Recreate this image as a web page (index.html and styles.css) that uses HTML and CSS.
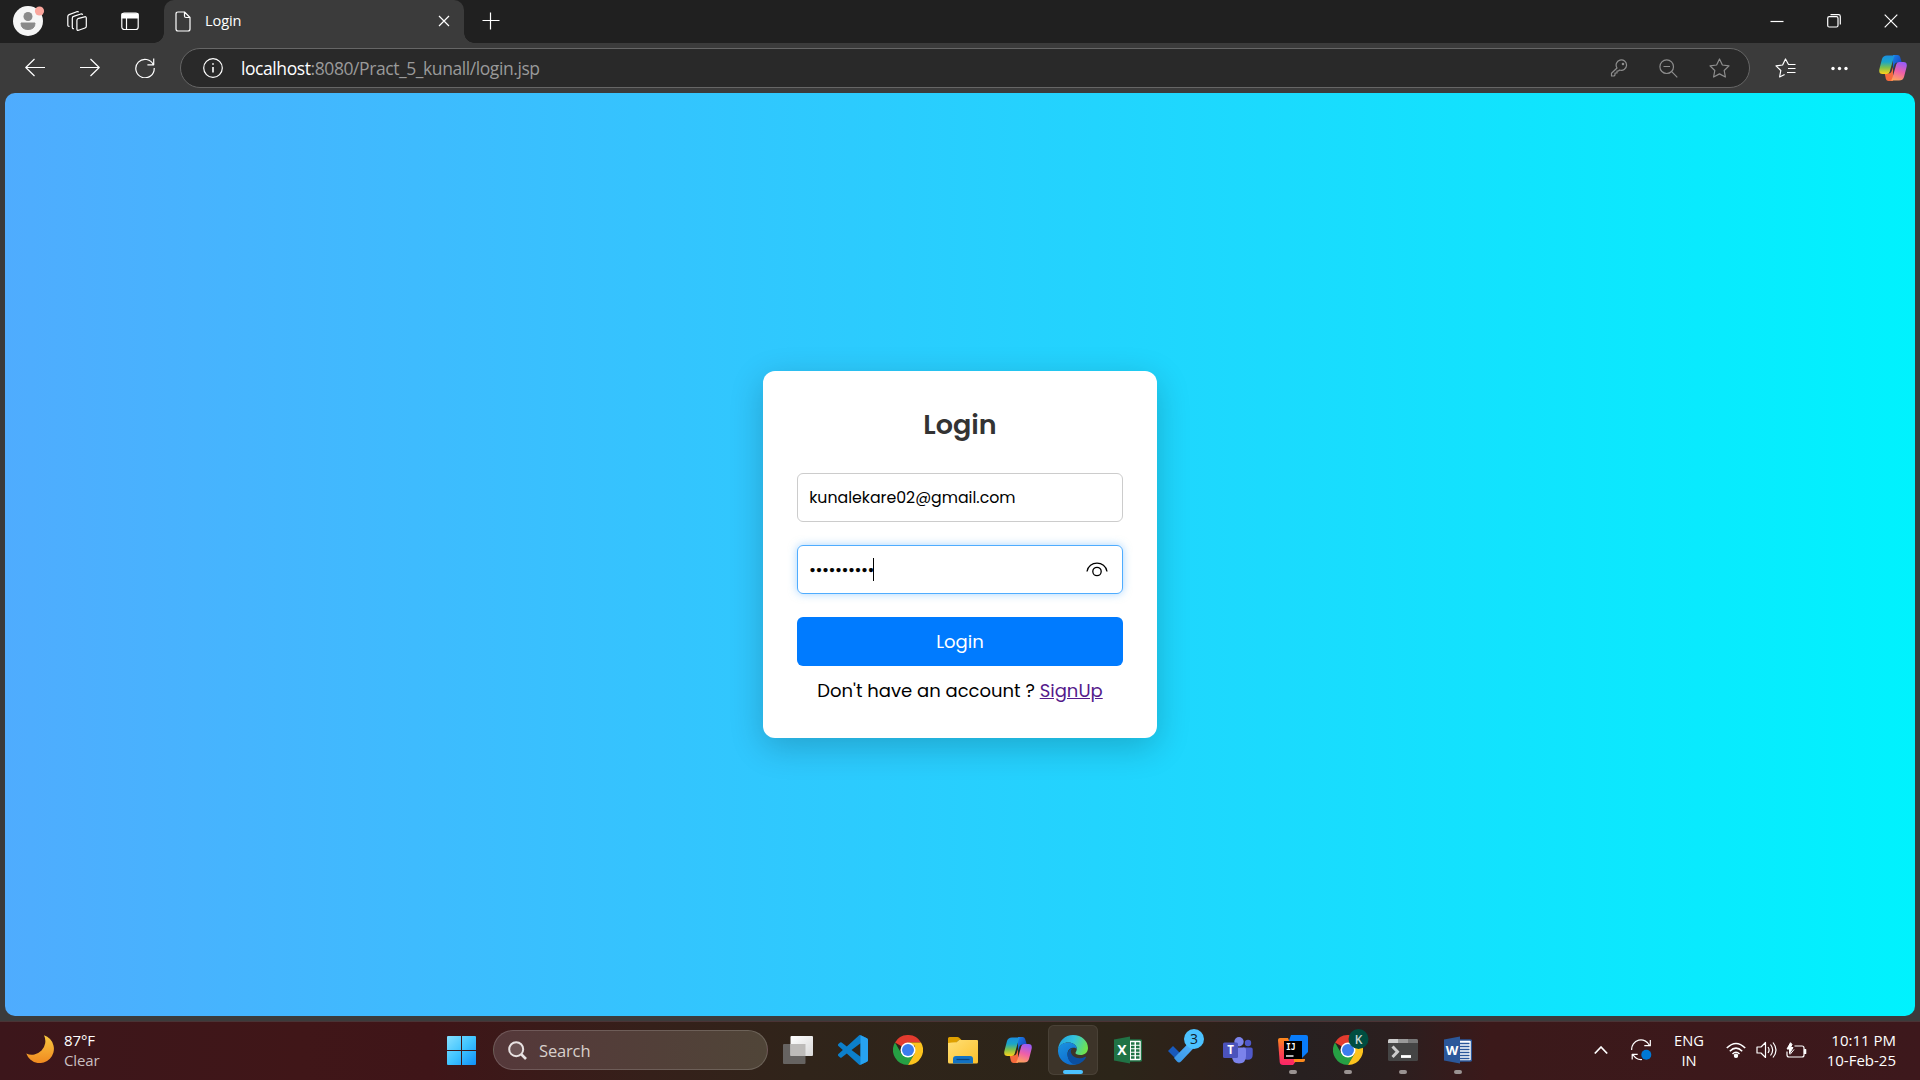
FILE: index.html
```html
<!DOCTYPE html>
<html lang="en">
<head>
<meta charset="utf-8">
<title>Login</title>
<link rel="stylesheet" href="styles.css">
</head>
<body>
<svg class="defs" width="0" height="0">
  <defs>
    <linearGradient id="cpA" x1="0" y1="0" x2="0" y2="1"><stop offset="0" stop-color="#1b8fe0"/><stop offset=".35" stop-color="#1aa5c8"/><stop offset=".65" stop-color="#7cc04e"/><stop offset="1" stop-color="#ffd21a"/></linearGradient>
    <linearGradient id="cpB" x1=".6" y1="0" x2=".3" y2="1"><stop offset="0" stop-color="#9a5cf5"/><stop offset=".5" stop-color="#ef5fa8"/><stop offset="1" stop-color="#ffa45c"/></linearGradient>
    <linearGradient id="cpC" x1="0" y1="0" x2="1" y2="1"><stop offset="0" stop-color="#1a7fe8"/><stop offset="1" stop-color="#1638b8"/></linearGradient>
    <linearGradient id="edA" x1="0" y1=".2" x2="1" y2=".5"><stop offset="0" stop-color="#1fa3e0"/><stop offset=".5" stop-color="#35c4dc"/><stop offset="1" stop-color="#6fe34c"/></linearGradient>
    <linearGradient id="edB" x1="0" y1="0" x2=".5" y2="1"><stop offset="0" stop-color="#1b93e0"/><stop offset="1" stop-color="#0f6fd0"/></linearGradient>
    <linearGradient id="moon" x1="0" y1="0" x2="0" y2="1"><stop offset="0" stop-color="#f9c740"/><stop offset="1" stop-color="#f08a20"/></linearGradient>
    <linearGradient id="win" x1="0" y1="0" x2="1" y2="1"><stop offset="0" stop-color="#86e0ff"/><stop offset=".5" stop-color="#40c4ff"/><stop offset="1" stop-color="#0f90f8"/></linearGradient>
    <linearGradient id="fold" x1="0" y1="0" x2="1" y2="1"><stop offset="0" stop-color="#ffdf75"/><stop offset="1" stop-color="#fcc02c"/></linearGradient>
    <linearGradient id="tv" x1="0" y1="0" x2="1" y2="1"><stop offset="0" stop-color="#ffffff"/><stop offset="1" stop-color="#d8d8d8"/></linearGradient>
    <linearGradient id="ijA" x1="0" y1="0" x2="0" y2="1"><stop offset="0" stop-color="#fd8a1c"/><stop offset=".5" stop-color="#fb4a4a"/><stop offset="1" stop-color="#fb2468"/></linearGradient>
    <linearGradient id="todo" x1="0" y1="1" x2="1" y2="0"><stop offset="0" stop-color="#3795e8"/><stop offset="1" stop-color="#5ab8fa"/></linearGradient>
    <symbol id="copilot" viewBox="0 0 28 26">
      <path d="M14 0h4.500q2 0 2.600 2l1.700 5.500h-4.500q-2 0-2.800 2L14 14Z" fill="url(#cpC)"/>
      <path d="M14 26H9.500q-2 0-2.600-2l-1.200-5.500h4q2 0 2.800-2L14 12Z" fill="#f56a3c"/>
      <path d="M8 .5h8.500q-1.400.7-2 3l-3.800 13.200q-.7 2.300-3 2.300H3.500Q.2 19 .2 15.700q0-1.200.4-2.500L3 4Q4 .5 8 .5Z" fill="url(#cpA)"/>
      <path d="M20 25.500h-8.500q1.400-.7 2-3l3.800-13.200q.7-2.300 3-2.300h4.200q3.300 0 3.300 3.300 0 1.200-.4 2.500L25 22q-1 3.500-5 3.500Z" fill="url(#cpB)"/>
    </symbol>
    <symbol id="chrome" viewBox="0 0 30 30">
      <path d="M15 15 2 7.500A15 15 0 0 1 28 7.500H15Z" fill="#e33b2e"/>
      <path d="M2 7.500A15 15 0 0 0 15 30l6.500-11.300L8.500 18.700Z" fill="#26a044"/>
      <path d="M28 7.500A15 15 0 0 1 15 30l6.500-11.300L22 11 15 7.500Z" fill="#fcc31e"/>
      <circle cx="15" cy="15" r="7.500" fill="#fff"/><circle cx="15" cy="15" r="6" fill="#3b7ded"/>
    </symbol>
  </defs>
</svg>

<header class="tabstrip">
  <svg class="avatar" width="32" height="32" viewBox="0 0 32 32"><circle cx="15" cy="16" r="15" fill="#f6f6f6"/><circle cx="15" cy="11.500" r="4.500" fill="#8a8a8a"/><path d="M8 18h14q0 6.500-7 6.500T8 18Z" fill="#8a8a8a" stroke="#8a8a8a" stroke-linejoin="round"/><circle cx="26.500" cy="6" r="4.600" fill="#fba69d"/></svg>
  <svg class="line collections" width="22" height="22" viewBox="0 0 22 22"><path d="m11.800 8.700 6.800-1.900q1.700-.4 1.700 1.300v8.200q0 1.300-1.300 1.700l-6.400 2.200q-1.700.5-1.700-1.200v-8.400q0-1.500.9-1.900Z"/><path d="M8 18.700q-1.700.3-1.700-1.400V8.200q0-1.400 1.300-1.800L14.800 4q1.400-.4 1.800.9"/><path d="M3.500 16.300q-1.700.3-1.700-1.400V6.500q0-1.400 1.300-1.900l7.700-2.900q1.400-.4 1.800.6"/></svg>
  <svg class="line tabmenu" width="18" height="19" viewBox="0 0 18 19"><rect x=".8" y="1" width="16.400" height="16.500" rx="2.500"/><path d="M1 1.800h16V6H1Z" fill="#fff"/><path d="M5.500 6v11"/></svg>
  <div class="tab">
    <svg class="line" width="16" height="21" viewBox="0 0 16 21"><path d="M3 1h6.500L15 6.500V18q0 2-2 2H3q-2 0-2-2V3q0-2 2-2Zm6.500 0v4q0 1.500 1.500 1.500h4"/></svg>
    <span class="tab-title">Login</span>
    <svg class="line tab-close" width="12" height="12" viewBox="0 0 12 12"><path d="m1 1 10 10M11 1 1 11"/></svg>
  </div>
  <svg class="line newtab" width="18" height="18" viewBox="0 0 18 18"><path d="M8.500.5v17M.5 8.500h17"/></svg>
  <div class="win-controls">
    <svg class="line" width="14" height="14" viewBox="0 0 14 14"><path d="M.5 7.500h13"/></svg>
    <svg class="line" width="14" height="14" viewBox="0 0 14 14"><rect x=".7" y="2.700" width="10.300" height="10.300" rx="1.500"/><path d="M3.500.7h8q1.800 0 1.800 1.800v8"/></svg>
    <svg class="line" width="14" height="14" viewBox="0 0 14 14"><path d="m.7.7 12.600 12.600M13.300.7.7 13.300"/></svg>
  </div>
</header>

<nav class="toolbar">
  <div class="nav-buttons">
    <svg class="line" width="20" height="20" viewBox="0 0 20 20"><path d="M20 9.500H.8M9.500 1 .8 9.500l8.700 8.500"/></svg>
    <svg class="line" width="20" height="20" viewBox="0 0 20 20"><path d="M0 9.500h19.200M10.500 1l8.700 8.500-8.700 8.500"/></svg>
    <svg class="line" width="20" height="20" viewBox="0 0 20 20"><path d="M18.500 7A9.200 9.200 0 1 0 19.200 10M18.700.5v6.300h-6.300"/></svg>
  </div>
  <div class="address">
    <svg class="line" width="20" height="20" viewBox="0 0 20 20"><circle cx="10" cy="10" r="9.300"/><path d="M10 9v5.500M10 5.200v1.600" stroke-width="1.600"/></svg>
    <span class="url"><span class="host">localhost</span>:8080/Pract_5_kunall/login.jsp</span>
    <div class="address-actions">
      <svg class="line" width="18" height="18" viewBox="0 0 18 18"><path d="M7 9A5.200 5.200 0 1 1 9.500 11L8.500 12H7v2H5v2L4 17H1.500v-2.800Z"/><circle cx="13" cy="5" r=".7"/></svg>
      <svg class="line" width="19" height="19" viewBox="0 0 19 19"><circle cx="7.700" cy="7.700" r="6.800"/><path d="m12.700 12.700 5.600 5.600M4.500 7.500H11"/></svg>
      <svg class="line" width="21" height="20" viewBox="0 0 21 20"><path d="m10.500 1 2.900 6 6.600.9-4.800 4.600 1.200 6.500-5.900-3.100L4.600 19l1.200-6.500L1 7.900 7.600 7Z"/></svg>
    </div>
  </div>
  <svg class="line favs" width="21" height="20" viewBox="0 0 21 20"><path d="M20.500 6.500h-7L10.500 1 7.600 7 1 7.900l4.800 4.600L4.600 19l5-2.500M13 10.500h7.500M12 14.500h8.500"/></svg>
  <svg class="more" width="17" height="5" viewBox="0 0 17 5"><circle cx="2" cy="2.500" r="1.700"/><circle cx="8.500" cy="2.500" r="1.700"/><circle cx="15" cy="2.500" r="1.700"/></svg>
  <svg class="copilot-btn" width="28" height="26"><use href="#copilot"/></svg>
</nav>

<main class="page">
  <form class="card">
    <h2 class="title">Login</h2>
    <div class="field"><span>kunalekare02@gmail.com</span></div>
    <div class="field focused"><span class="dots">••••••••••</span><i class="caret"></i>
      <svg class="eye" width="22" height="15" viewBox="0 0 22 15"><path d="M1 9.500C2.500-1.800 19.500-1.800 21 9.500"/><circle cx="11" cy="9.500" r="4.200"/></svg>
    </div>
    <div class="submit"><span>Login</span></div>
    <p class="signup">Don't have an account ? <a href="#">SignUp</a></p>
  </form>
</main>

<footer class="taskbar">
  <div class="weather">
    <svg class="moon" width="28" height="28" viewBox="0 0 28 28"><path d="M18 .3A14.200 14.200 0 1 1 .3 18.500 13.500 13.500 0 0 0 18 .3Z" fill="url(#moon)"/></svg>
    <div class="weather-text"><span>87°F</span><span class="dim">Clear</span></div>
  </div>
  <div class="start"><svg width="29" height="29" viewBox="0 0 29 29"><path d="M1 0h13v14H0V1Q0 0 1 0ZM15 0h13q1 0 1 1v13H15ZM0 15h14v14H1q-1 0-1-1ZM15 15h14v13q0 1-1 1H15Z" fill="url(#win)"/></svg></div>
  <div class="search">
    <svg width="19" height="19" viewBox="0 0 19 19" fill="none" stroke="#e8e2e2" stroke-width="2"><circle cx="8.200" cy="8.200" r="7" fill="#ffffff22"/><path d="m13 13 5 5" stroke-width="2.600"/></svg>
    <span>Search</span>
  </div>
  <div class="apps">
    <div class="app"><svg width="30" height="30" viewBox="0 0 30 30"><rect y="9" width="22.500" height="20" rx="1" fill="#666361"/><rect x="7.500" y="1" width="22.500" height="20" rx="1" fill="url(#tv)"/><path d="M7.500 9h15v12h-15Z" fill="#bdbbb9"/></svg></div>
    <div class="app"><svg width="30" height="30" viewBox="0 0 24 24"><path fill="#0c7fcb" d="M23.150 2.587L18.210.210a1.494 1.494 0 0 0-1.705.290l-9.460 8.630-4.120-3.128a.999.999 0 0 0-1.276.057L.327 7.261A1 1 0 0 0 .326 8.740L3.899 12 .326 15.260a1 1 0 0 0 .001 1.479L1.650 17.940a.999.999 0 0 0 1.276.057l4.120-3.128 9.460 8.630a1.492 1.492 0 0 0 1.704.290l4.942-2.377A1.500 1.500 0 0 0 24 20.060V3.939a1.500 1.500 0 0 0-.850-1.352zm-5.146 14.861L10.826 12l7.178-5.448v10.896z"/><path d="m18 .2 5.150 2.387Q24 3 24 3.939V20.060q0 1-.85 1.353L18 23.850Z" fill="#27a2f0"/></svg></div>
    <div class="app"><svg width="30" height="30"><use href="#chrome"/></svg></div>
    <div class="app"><svg width="30" height="30" viewBox="0 0 30 30"><path d="M0 8V3.500Q0 2 1.500 2H9.500q1 0 1.700.7L13.500 5H11L8 8Z" fill="#dfa000"/><path d="M0 8Q4 7.500 8.500 7.200L11 5h18q1 0 1 1v21q0 1.500-1.500 1.500h-27Q0 28.500 0 27Z" fill="url(#fold)"/><path d="M5 28.500V24q0-3 3-3h14q3 0 3 3v4.500Z" fill="#1272c4"/><path d="M8.500 24.500h13" stroke="#08427c" stroke-width="1.200"/></svg></div>
    <div class="app"><svg width="28" height="26"><use href="#copilot"/></svg></div>
    <div class="app active"><svg width="30" height="30" viewBox="0 0 30 30"><path d="M0 14.500C1 5.500 7 0 15 0c9 0 15 6.200 15 13 0 4.500-3.500 7-7.500 7-3.500 0-5-1.200-5-2 0-1 1.300-1.600 1.300-4.200 0-3.800-4-6.300-8.500-6.300C5.500 7.500 2 10 0 14.500Z" fill="url(#edA)"/><path d="M0 15C.5 10.500 5 7.500 10 7.500c5 0 8.800 2.600 8.800 6.300-2.500-2.300-9.300-1.500-9.300 5.200 0 5.500 4.500 10.500 9.300 10.300C9.500 31.800-.5 25 0 15Z" fill="url(#edB)"/><path d="M17.500 12.700c-4 0-8 2.600-8 6.800C9.500 25.500 14 30 18 29.600c4.500-.7 8-3.600 9.800-6.800.4-.8-.3-1.300-1-.9-5.800 3-14 .5-14-5.900 0-1.500 1.800-3.300 4.700-3.300Z" fill="#0b4fa0"/></svg><i class="bar"></i></div>
    <div class="app"><svg width="28" height="28" viewBox="0 0 28 28"><path d="M14 4h12q1.500 0 1.500 1.500v18q0 1.500-1.500 1.500H14Z" fill="#fff" stroke="#207245" stroke-width="1.500"/><path d="M17 7.500h3.500M22 7.500h3.500M17 11h3.500M22 11h3.500M17 14.500h3.500M22 14.500h3.500M17 18h3.500M22 18h3.500M17 21.500h3.500M22 21.500h3.500" stroke="#207245" stroke-width="2.300"/><path d="m0 3.500 16-3v27l-16-3Z" fill="#207245"/><text x="8" y="19" class="glyph" font-size="14">X</text></svg></div>
    <div class="app"><svg class="todo" width="36" height="36" viewBox="0 0 36 36"><path d="m0 22 5-5 7 7-5 5Z" fill="#185abd"/><path d="M7 29 26.500 9l5 5L14 32.500q-2 2-4 0Z" fill="url(#todo)" transform="translate(-1)"/><circle cx="26" cy="10" r="10" fill="#4cc2ff"/><text x="26" y="15" class="count" font-size="14">3</text></svg></div>
    <div class="app"><svg width="30" height="28" viewBox="0 0 30 28"><circle cx="25" cy="7" r="3.200" fill="#5059c9"/><path d="M20 11.500h8q1.700 0 1.700 1.700v5.500q0 5-5 5T20 19Z" fill="#5059c9"/><circle cx="16" cy="5.700" r="4.700" fill="#7b83eb"/><path d="M9 11.500h12q2 0 2 2V20q0 7.500-7 7.500T9 20Z" fill="#7b83eb"/><rect y="6.500" width="15" height="15.500" rx="1.500" fill="#4b53bc"/><text x="7.500" y="18.300" class="glyph" font-size="11.500">T</text></svg></div>
    <div class="app run"><svg width="30" height="30" viewBox="0 0 30 30"><path d="M13 0h15q2 0 2 2v15l-6 6L10 8Z" fill="#087cfa"/><path d="M0 5q0-2 2-2h8l9 22-4 5H5q-3 0-3.300-3Z" fill="url(#ijA)"/><path d="M16 24h11v1q0 2-2 2h-9Z" fill="#fd8a1c"/><path d="M6 6h18v18H6Z" fill="#000"/><text x="8" y="14.500" class="ij" font-size="8">IJ</text><path d="M8 21h7.500" stroke="#fff" stroke-width="1.400"/></svg></div>
    <div class="app run"><svg class="chrome-k" width="36" height="36" viewBox="0 0 36 36"><use href="#chrome" x="0" y="6" width="30" height="30"/><circle cx="25.500" cy="10" r="10" fill="#004d40"/><text x="25.500" y="14.500" class="k" font-size="12">K</text></svg></div>
    <div class="app run"><svg width="30" height="22" viewBox="0 0 30 22"><rect width="30" height="22" rx="1.500" fill="#454545"/><path d="M1.500 0H10v4H0V1.500Q0 0 1.500 0Z" fill="#ccc"/><path d="M10 0h10v4H10Z" fill="#999"/><path d="M20 0h8.500Q30 0 30 1.500V4H20Z" fill="#777"/><path d="m4.500 7.500 5 5.300-5 5.200" fill="none" stroke="#ccc" stroke-width="3"/><path d="M13 17.500h10" stroke="#fff" stroke-width="2.800"/></svg></div>
    <div class="app run"><svg width="28" height="28" viewBox="0 0 28 28"><path d="M14 4h12q1.500 0 1.500 1.500v18q0 1.500-1.500 1.500H14Z" fill="#fff" stroke="#2b579a" stroke-width="1.500"/><path d="M16 7.500h9.500M16 10.500h9.500M16 13.500h9.500M16 16.500h9.500M16 19.500h9.500M16 22.500h9.500" stroke="#2b579a" stroke-width="1.400"/><path d="m0 3.500 16-3v27l-16-3Z" fill="#2b579a"/><text x="8" y="19" class="glyph" font-size="13">W</text></svg></div>
  </div>
  <div class="tray">
    <svg class="line" width="14" height="10" viewBox="0 0 14 10"><path d="m.8 8.500 6.200-6.500 6.200 6.500" stroke-width="1.800"/></svg>
    <svg class="line sync" width="21" height="22" viewBox="0 0 21 22"><path d="M.7 11A9.300 9.300 0 0 1 18.500 6.500M19.300 1v5.700h-6M11 20.500A9.300 9.300 0 0 1 2 15.500M1.200 20.500v-5.200h5.500"/><circle cx="15.300" cy="15.800" r="5" class="sync-dot"/></svg>
    <div class="lang"><span>ENG</span><span>IN</span></div>
    <svg class="line wifi" width="20" height="16" viewBox="0 0 20 16"><path d="M.8 6Q10-3 19.200 6M3.800 9.200q6.200-6 12.400 0M6.500 12q3.500-3.500 7 0" stroke-width="1.600"/><circle cx="10" cy="13.700" r="1.600" fill="#fff"/></svg>
    <svg class="line volume" width="21" height="18" viewBox="0 0 21 18"><path d="M1 6h4l4.500-4.500v15L5 12H1Z"/><path d="M12 6q2.200 3 0 6M14.500 3.500q4.300 5.500 0 11M17 1.500q6 7.500 0 15"/></svg>
    <svg class="line battery" width="21" height="17" viewBox="0 0 21 17"><path d="M8.500 4H16q2 0 2 2v7q0 2-2 2H3q-2 0-2-2V9.500"/><path d="M18.500 7.500v4h1.200v-4Z" fill="#fff"/><path d="M4.500.7 1 7h2.500v4.500L7 5.500H4.500L6 2.500ZM4 12.500l4-5" fill="#fff" stroke-width="1"/></svg>
    <div class="clock"><span>10:11 PM</span><span>10-Feb-25</span></div>
  </div>
</footer>
</body>
</html>
```
FILE: styles.css
```css
* { box-sizing: border-box; }
body {
  margin: 0;
  width: 1920px;
  height: 1080px;
  overflow: hidden;
  display: flex;
  flex-direction: column;
  background: #3b3b3b;
  color: #fff;
  font-family: "Segoe UI", "Open Sans", "Noto Sans", sans-serif;
}
svg { flex: none; display: block; }
.defs { position: absolute; }
.line { fill: none; stroke: #fff; stroke-width: 1.2; stroke-linejoin: round; }

/* Tab strip */
.tabstrip {
  height: 43px;
  flex: none;
  display: flex;
  align-items: center;
  background: #202020;
  padding: 0 0 1px 13px;
}
.collections { margin-left: 21px; }
.tabmenu { margin-left: 33px; }
.tab {
  position: relative;
  width: 300px;
  height: 43px;
  margin: 0 0 -1px 25px;
  padding: 0 14px 1px 11px;
  display: flex;
  align-items: center;
  background: #3b3b3b;
  border-radius: 10px 10px 0 0;
}
.tab::before, .tab::after {
  content: "";
  position: absolute;
  bottom: 0;
  width: 10px;
  height: 10px;
}
.tab::before { left: -10px; background: radial-gradient(circle at 0 0, #202020 9.5px, #3b3b3b 10px); }
.tab::after { right: -10px; background: radial-gradient(circle at 100% 0, #202020 9.5px, #3b3b3b 10px); }
.tab-title { margin: 0 0 2px 14px; font-size: 14.6px; letter-spacing: -0.1px; line-height: 20px; }
.tab-close { margin-left: auto; }
.newtab { margin-left: 18px; }
.win-controls { margin-left: auto; display: flex; gap: 43px; padding-right: 22px; }

/* Toolbar */
.toolbar { height: 50px; flex: none; display: flex; align-items: center; padding-left: 25px; }
.nav-buttons { display: flex; gap: 35px; }
.address {
  width: 1570px;
  height: 40px;
  margin-left: 25px;
  padding: 0 20px 0 22px;
  display: flex;
  align-items: center;
  background: #292929;
  border: 1px solid #666;
  border-radius: 20px;
}
.url { margin: 0 0 1px 18px; color: #9a9a9a; font-size: 17.5px; line-height: 24px; letter-spacing: -0.42px; white-space: nowrap; }
.host { color: #fff; }
.address-actions { margin-left: auto; margin-right: -1px; display: flex; align-items: center; gap: 31px; }
.address-actions .line { stroke: #8e8e8e; }
.favs { margin-left: 25px; }
.more { margin-left: 35px; fill: #fff; }
.copilot-btn { margin-left: 31px; }

/* Login page */
.page {
  height: 923px;
  flex: none;
  margin: 0 5px 5px;
  display: flex;
  align-items: center;
  justify-content: center;
  border-radius: 10px;
  background: linear-gradient(90deg, #4facfe, #00f2fe);
  font-family: Poppins, Inter, sans-serif;
}
.card {
  width: 394px;
  height: 367px;
  padding: 33px 34px;
  border-radius: 12px;
  background: #fff;
  color: #000;
  box-shadow: 0 9px 34px rgba(0, 0, 0, 0.2);
}
.title { margin: 0 0 27px; height: 42px; line-height: 42px; text-align: center; font-size: 27px; font-weight: 600; color: #333; }
.field {
  height: 49px;
  margin-bottom: 23px;
  padding: 0 14px 0 11.25px;
  display: flex;
  align-items: center;
  border: 1px solid #ccc;
  border-radius: 6px;
  font-size: 15.75px;
}
.field.focused { border-color: #4facfe; box-shadow: 0 0 9px rgba(79, 172, 254, 0.5); }
.dots { -webkit-text-stroke: 0.3px #000; }
.caret { width: 1px; height: 23px; margin-left: -1px; background: #000; }
.eye { margin-left: auto; fill: none; stroke: #000; stroke-width: 1.3; }
.submit {
  height: 49px;
  display: flex;
  align-items: center;
  justify-content: center;
  border-radius: 6px;
  background: #007bff;
  color: #fff;
  font-size: 18px;
}
.signup { margin: 10px 0 0; line-height: 29px; font-size: 18px; text-align: center; white-space: nowrap; }
.signup a { color: #551a8b; }

/* Taskbar */
.taskbar {
  height: 59px;
  flex: none;
  display: flex;
  align-items: center;
  border-top: 1px solid #4a3335;
  padding: 0 24px 2px 26px;
  background: linear-gradient(90deg, #3c161b 0, #401618 300px, #3f1518 430px, #35201a 650px, #30241a 800px, #2c2519 1120px, #2e2119 1200px, #272020 1300px, #2b1f1f 1390px, #3b191a 1490px, #3d181c 1920px);
}
.weather { width: 411px; display: flex; align-items: center; gap: 10px; font-size: 15px; letter-spacing: -0.1px; }
.moon { margin-bottom: 2px; }
.weather-text, .lang, .clock { display: flex; flex-direction: column; line-height: 20px; }
.dim { color: #c9bfc0; }
.start { width: 50px; display: flex; justify-content: center; padding-right: 1px; }
.search {
  width: 275px;
  height: 40px;
  margin: 0 5px 0 6px;
  padding-left: 14px;
  display: flex;
  align-items: center;
  gap: 12px;
  border: 1px solid rgba(255, 255, 255, 0.16);
  border-radius: 20px;
  background: linear-gradient(90deg, #55383a, #504538);
  color: #d8d0cc;
  font-size: 16.5px;
  letter-spacing: -0.15px;
}
.apps { display: flex; gap: 5px; }
.app { position: relative; width: 50px; height: 50px; display: flex; align-items: center; justify-content: center; }
.active { background: #3d3429; border-radius: 6px; box-shadow: inset 0 0 0 1px #494136; }
.bar { position: absolute; left: 15px; bottom: 1px; width: 20px; height: 4px; border-radius: 2px; background: #4cc2ff; }
.run::after { content: ""; position: absolute; left: 21px; bottom: 1px; width: 8px; height: 4px; border-radius: 2px; background: #9a9392; }
.glyph { fill: #fff; font-family: "Open Sans", sans-serif; font-weight: 700; text-anchor: middle; }
.count { fill: #10222e; text-anchor: middle; }
.ij { fill: #fff; font-family: "DejaVu Sans Mono", monospace; font-weight: 700; }
.k { fill: #c5d6d2; text-anchor: middle; font-weight: 600; }
.todo, .chrome-k { transform: translate(3px, -3px); }
.tray { margin-left: auto; display: flex; align-items: center; font-size: 15px; }
.sync { margin-left: 23px; }
.sync-dot { fill: #0078d4; stroke: none; }
.lang { width: 40px; margin-left: 17px; text-align: center; font-size: 14.7px; }
.wifi { margin-left: 17px; }
.volume { margin-left: 10px; }
.battery { margin-left: 9px; }
.clock { width: 89px; margin-top: -1px; text-align: right; }
```
